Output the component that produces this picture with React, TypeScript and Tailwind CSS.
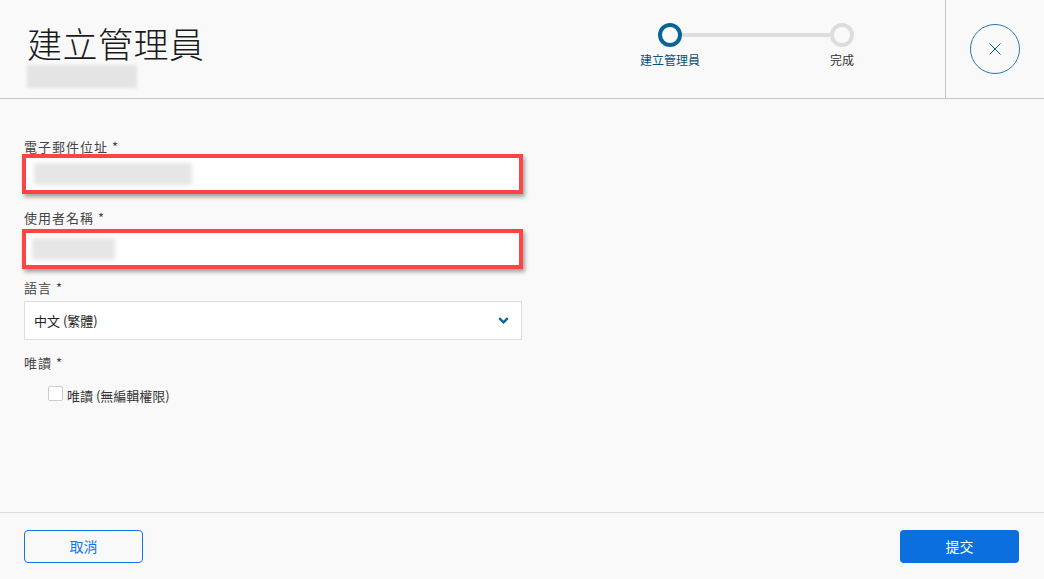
import React from "react";

const font = { fontFamily: '"Noto Sans CJK TC", "Noto Sans", sans-serif' };

export default function App() {
  return (
    <div
      className="w-[1044px] h-[579px] flex flex-col bg-[#f9f9f9] text-[#333] overflow-hidden"
      style={font}
    >
      {/* Header */}
      <div className="h-[99px] flex border-b border-[#c6c6c6] shrink-0">
        <div className="flex-1 pl-[27px] pt-[22px]">
          <h1 className="text-[35px] leading-[42px] font-extralight text-[#1a1a1a] tracking-[0.5px]">建立管理員</h1>
          <div className="mt-[1px] w-[110px] h-[23px] bg-[#e4e4e4] blur-[1.5px]" />
        </div>
        {/* Stepper */}
        <div className="w-[232px] mr-[73px] pt-[23px]">
          <div className="flex items-center pl-[18px]">
            <div className="w-[24px] h-[24px] rounded-full border-[4px] border-[#0a6496] bg-[#f9f9f9]" />
            <div className="w-[148px] h-[4px] bg-[#dddddd]" />
            <div className="w-[24px] h-[24px] rounded-full border-[4px] border-[#dddddd] bg-[#f9f9f9]" />
          </div>
          <div className="flex justify-between mt-[5px] text-[12px] leading-[16px]">
            <span className="w-[60px] text-center text-[#0b4f7c]">建立管理員</span>
            <span className="w-[60px] text-center text-[#333]">完成</span>
          </div>
        </div>
        <div className="w-[99px] border-l border-[#c6c6c6] flex items-center justify-center">
          <button className="w-[50px] h-[50px] rounded-full border border-[#2a78a8] flex items-center justify-center">
            <svg width="14" height="14" viewBox="0 0 14 14" fill="none">
              <path d="M1.5 1.5L12.5 12.5M12.5 1.5L1.5 12.5" stroke="#0b5f91" strokeWidth="1" />
            </svg>
          </button>
        </div>
      </div>

      {/* Body */}
      <div className="flex-1 pl-[22px] pt-[40px]">
        <div className="w-[501px] text-[13px]">
          <label className="block pl-[2px] leading-[15px] text-[#444] tracking-[1px]">電子郵件位址 *</label>
          <div className="h-[40px] border-[4px] border-[#ff4444] bg-white shadow-[2px_3px_4px_rgba(0,0,0,0.35)] flex items-center pl-[8px]">
            <div className="w-[158px] h-[22px] bg-[#e6e6e6] blur-[2px]" />
          </div>

          <label className="block mt-[16px] pl-[2px] leading-[15px] text-[#444] tracking-[1px]">使用者名稱 *</label>
          <div className="mt-[4px] h-[40px] border-[4px] border-[#ff4444] bg-white shadow-[2px_3px_4px_rgba(0,0,0,0.35)] flex items-center pl-[6px]">
            <div className="w-[83px] h-[22px] bg-[#e6e6e6] blur-[2px]" />
          </div>

          <label className="block mt-[11px] pl-[2px] leading-[15px] text-[#444] tracking-[1px]">語言 *</label>
          <div className="mt-[6px] ml-[2px] w-[498px] h-[39px] border border-[#dddddd] bg-white flex items-center justify-between pl-[9px] pr-[12px]">
            <span className="text-[13px] text-[#222]">中文 (繁體)</span>
            <svg width="11" height="7" viewBox="0 0 11 7" fill="none">
              <path d="M1.2 1.2L5.5 5.3L9.8 1.2" stroke="#0a6496" strokeWidth="2.4" />
            </svg>
          </div>

          <label className="block mt-[15px] pl-[2px] leading-[15px] text-[#444] tracking-[1px]">唯讀 *</label>
          <div className="mt-[13px] pl-[26px] flex items-center">
            <div className="w-[15px] h-[15px] rounded-[2px] border border-[#cccccc] bg-white" />
            <span className="ml-[4px] mt-[5px] text-[13px] leading-[15px] text-[#333]">唯讀 (無編輯權限)</span>
          </div>
        </div>
      </div>

      {/* Footer */}
      <div className="h-[67px] border-t border-[#dedede] flex items-center justify-between pl-[24px] pr-[25px] shrink-0">
        <button className="w-[119px] h-[33px] rounded-[4px] border border-[#1473e6] text-[14px] text-[#1473e6] bg-transparent">
          取消
        </button>
        <button className="w-[119px] h-[33px] rounded-[4px] bg-[#0b6fde] text-[14px] text-white">
          提交
        </button>
      </div>
    </div>
  );
}
